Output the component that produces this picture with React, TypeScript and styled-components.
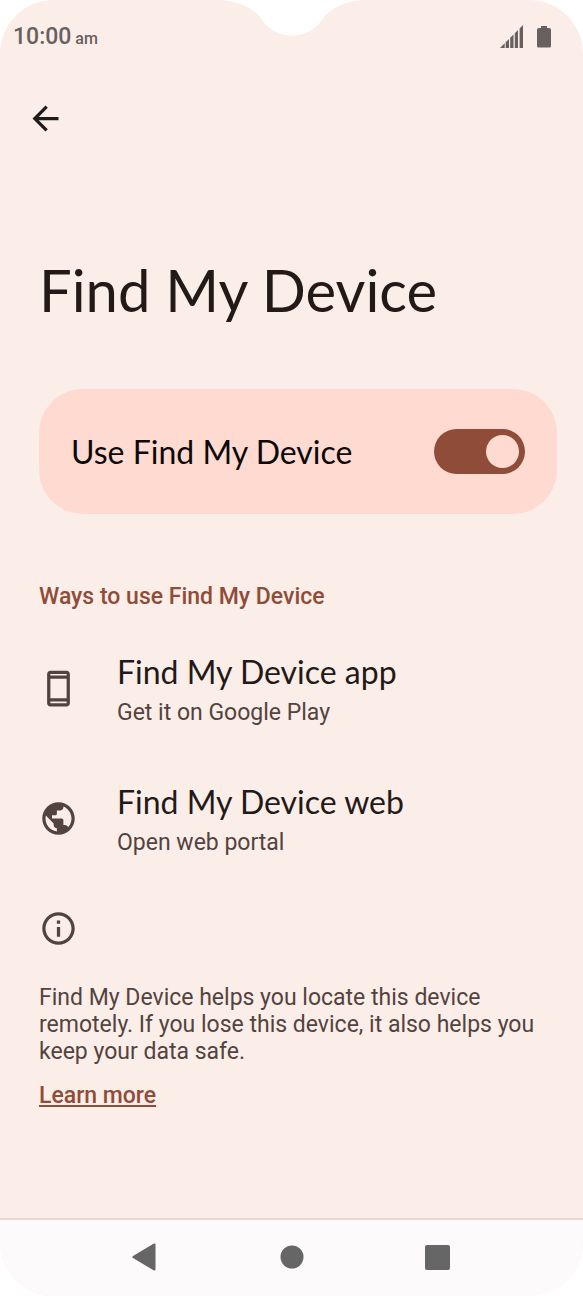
import React, { useState } from "react";
import styled, { createGlobalStyle } from "styled-components";

const color = {
  surface: "#fbeee9",
  card: "#ffdad1",
  accent: "#8f4c38",
  text: "#231a18",
  muted: "#53433f",
  status: "#68605e",
  nav: "#fcfafb",
  navIcon: "#666666",
  divider: "#e7d6d6",
};

const display = `Lato, "Open Sans", sans-serif`;

const GlobalStyle = createGlobalStyle`
  *, *::before, *::after { box-sizing: border-box; }
  body { margin: 0; background: #ffffff; font-family: Roboto, "Liberation Sans", sans-serif; }
  h1, h2, p, ul { margin: 0; padding: 0; }
  button { border: 0; padding: 0; background: none; cursor: pointer; }
  svg { display: block; flex: none; }
`;

const Screen = styled.div`
  position: relative;
  display: flex;
  flex-direction: column;
  min-height: 100vh;
  border-radius: 54px;
  overflow: hidden;
  background: ${color.surface};
`;

const Notch = styled.svg`
  position: absolute;
  top: 0;
  left: 50%;
  transform: translateX(-50%);
`;

const StatusBar = styled.header`
  display: flex;
  align-items: center;
  justify-content: space-between;
  height: 76px;
  padding: 0 32px 0 13px;
  color: ${color.status};
`;

const Clock = styled.time`
  font-size: 23px;
  font-weight: 500;
  line-height: 28px;
`;

const Meridiem = styled.span`
  font-size: 16px;
`;

const StatusIcons = styled.div`
  display: flex;
  align-items: center;
  gap: 14px;
  margin-bottom: 3px;
`;

const Toolbar = styled.div`
  display: flex;
  align-items: center;
  height: 84px;
  padding-left: 26px;
`;

const BackButton = styled.button`
  color: #1f1b1a;
`;

const Content = styled.main`
  flex: 1;
  display: flex;
  flex-direction: column;
  padding: 95px 26px 96px 39px;
`;

const Title = styled.h1`
  font-family: ${display};
  font-size: 58px;
  font-weight: 400;
  line-height: 70px;
  color: ${color.text};
`;

const SwitchCard = styled.label`
  display: flex;
  align-items: center;
  justify-content: space-between;
  min-height: 125px;
  margin-top: 64px;
  padding: 0 32px;
  border-radius: 44px;
  background: ${color.card};
  color: #0d0908;
  font-family: ${display};
  font-size: 32px;
  line-height: 40px;
  cursor: pointer;
`;

const Switch = styled.input`
  appearance: none;
  display: flex;
  align-items: center;
  flex: none;
  width: 91px;
  height: 45px;
  margin: 0;
  padding: 0 6px;
  border-radius: 23px;
  background: ${color.muted};
  cursor: pointer;

  &::before {
    content: "";
    width: 33px;
    height: 33px;
    border-radius: 50%;
    background: ${color.card};
  }

  &:checked {
    justify-content: flex-end;
    background: ${color.accent};
  }
`;

const SectionHeading = styled.h2`
  margin-top: 69px;
  color: ${color.accent};
  font-size: 23px;
  font-weight: 500;
  line-height: 27px;
`;

const OptionList = styled.ul`
  margin-top: 13px;
  list-style: none;
`;

const Option = styled.button`
  display: flex;
  align-items: center;
  gap: 39px;
  width: 100%;
  min-height: 130px;
  color: ${color.muted};
  font-family: inherit;
  text-align: left;
`;

const OptionText = styled.span`
  display: flex;
  flex-direction: column;
  gap: 7px;
  padding-top: 2px;
`;

const OptionTitle = styled.span`
  color: ${color.text};
  font-family: ${display};
  font-size: 32px;
  line-height: 40px;
`;

const OptionSummary = styled.span`
  font-size: 23px;
  line-height: 27px;
`;

const Footer = styled.section`
  display: flex;
  flex-direction: column;
  align-items: flex-start;
  margin-top: 26px;
  color: ${color.muted};
  font-size: 23px;
  line-height: 27px;
`;

const FooterText = styled.p`
  margin-top: 36px;
`;

const LearnMore = styled.a`
  margin-top: 17px;
  color: ${color.accent};
  font-weight: 500;
  text-decoration: underline;
`;

const NavBar = styled.nav`
  display: flex;
  align-items: center;
  justify-content: center;
  gap: 106px;
  height: 78px;
  padding-bottom: 2px;
  border-top: 2px solid ${color.divider};
  background: ${color.nav};
  color: ${color.navIcon};
`;

const NavButton = styled.button`
  display: grid;
  place-items: center;
  width: 40px;
  height: 40px;
  color: inherit;
`;

const icons = {
  back: "M20 11H7.83l5.59-5.59L12 4l-8 8 8 8 1.41-1.41L7.83 13H20v-2z",
  phone:
    "M17 1.01L7 1C5.9 1 5 1.9 5 3v18c0 1.1.9 2 2 2h10c1.1 0 2-.9 2-2V3c0-1.1-.9-1.99-2-1.99zM17 21H7v-1h10v1zM17 18H7V6h10v12zM7 4V3h10v1H7z",
  globe:
    "M12 2C6.48 2 2 6.48 2 12s4.48 10 10 10 10-4.48 10-10S17.52 2 12 2zm-1 17.93c-3.95-.49-7-3.85-7-7.93 0-.62.08-1.21.21-1.79L9 15v1c0 1.1.9 2 2 2v1.93zm6.9-2.54c-.26-.81-1-1.39-1.9-1.39h-1v-3c0-.55-.45-1-1-1H8v-2h2c.55 0 1-.45 1-1V7h2c1.1 0 2-.9 2-2v-.41c2.93 1.19 5 4.06 5 7.41 0 2.08-.8 3.97-2.1 5.39z",
  info: "M11 7h2v2h-2zm0 4h2v6h-2zm1-9C6.48 2 2 6.48 2 12s4.48 10 10 10 10-4.48 10-10S17.52 2 12 2zm0 18c-4.41 0-8-3.59-8-8s3.59-8 8-8 8 3.59 8 8-3.59 8-8 8z",
};

function Icon({ name, size = 39 }: { name: keyof typeof icons; size?: number }) {
  return (
    <svg width={size} height={size} viewBox="0 0 24 24" fill="currentColor" aria-hidden="true">
      <path fillRule="evenodd" d={icons[name]} />
    </svg>
  );
}

const options: { icon: keyof typeof icons; title: string; summary: string }[] = [
  { icon: "phone", title: "Find My Device app", summary: "Get it on Google Play" },
  { icon: "globe", title: "Find My Device web", summary: "Open web portal" },
];

export default function App() {
  const [enabled, setEnabled] = useState(true);

  return (
    <>
      <GlobalStyle />
      <Screen>
        <Notch width="143" height="36" viewBox="0 0 143 36" fill="#ffffff" aria-hidden="true">
          <path d="M0 0C18 1 33 8 41 19C49 31 60 35.5 71.5 35.5S94 31 102 19C110 8 125 1 143 0Z" />
        </Notch>
        <StatusBar>
          <Clock>
            10:00
            <Meridiem> am</Meridiem>
          </Clock>
          <StatusIcons>
            <svg width="23" height="23" viewBox="0 0 23 23" fill="currentColor" aria-hidden="true">
              <path d="M0 23L4.700 18.300V23ZM5.700 17.300L9 14V23H5.700ZM10.200 12.800L13.500 9.500V23H10.200ZM14.800 8.200L18 5V23H14.800ZM19.600 3.400L23 0V23H19.600Z" />
            </svg>
            <svg width="14" height="22" viewBox="0 0 14 22" fill="currentColor" aria-hidden="true">
              <path d="M4 0H10V2H12Q14 2 14 4V20Q14 21.5 12.5 21.5H1.5Q0 21.5 0 20V4Q0 2 2 2H4Z" />
            </svg>
          </StatusIcons>
        </StatusBar>
        <Toolbar>
          <BackButton type="button" aria-label="Back">
            <Icon name="back" />
          </BackButton>
        </Toolbar>
        <Content>
          <Title>Find My Device</Title>
          <SwitchCard>
            Use Find My Device
            <Switch
              type="checkbox"
              role="switch"
              checked={enabled}
              onChange={(event) => setEnabled(event.target.checked)}
            />
          </SwitchCard>
          <SectionHeading>Ways to use Find My Device</SectionHeading>
          <OptionList>
            {options.map((option) => (
              <li key={option.title}>
                <Option type="button">
                  <Icon name={option.icon} />
                  <OptionText>
                    <OptionTitle>{option.title}</OptionTitle>
                    <OptionSummary>{option.summary}</OptionSummary>
                  </OptionText>
                </Option>
              </li>
            ))}
          </OptionList>
          <Footer>
            <Icon name="info" />
            <FooterText>
              Find My Device helps you locate this device remotely. If you lose this device, it also
              helps you keep your data safe.
            </FooterText>
            <LearnMore href="#learn-more">Learn more</LearnMore>
          </Footer>
        </Content>
        <NavBar>
          <NavButton type="button" aria-label="Back">
            <svg width="28" height="28" viewBox="0 0 28 28" fill="currentColor" aria-hidden="true">
              <path d="M21.5 0.8Q23.500 -0.300 23.500 1.800V26.200Q23.500 28.300 21.500 27.200L1 15Q-0.500 14 1 13Z" />
            </svg>
          </NavButton>
          <NavButton type="button" aria-label="Home">
            <svg width="24" height="24" viewBox="0 0 24 24" fill="currentColor" aria-hidden="true">
              <ellipse cx="12" cy="12" rx="11.5" ry="11.5" />
            </svg>
          </NavButton>
          <NavButton type="button" aria-label="Recent apps">
            <svg width="25" height="25" viewBox="0 0 25 25" fill="currentColor" aria-hidden="true">
              <rect width="25" height="25" rx="2" />
            </svg>
          </NavButton>
        </NavBar>
      </Screen>
    </>
  );
}
